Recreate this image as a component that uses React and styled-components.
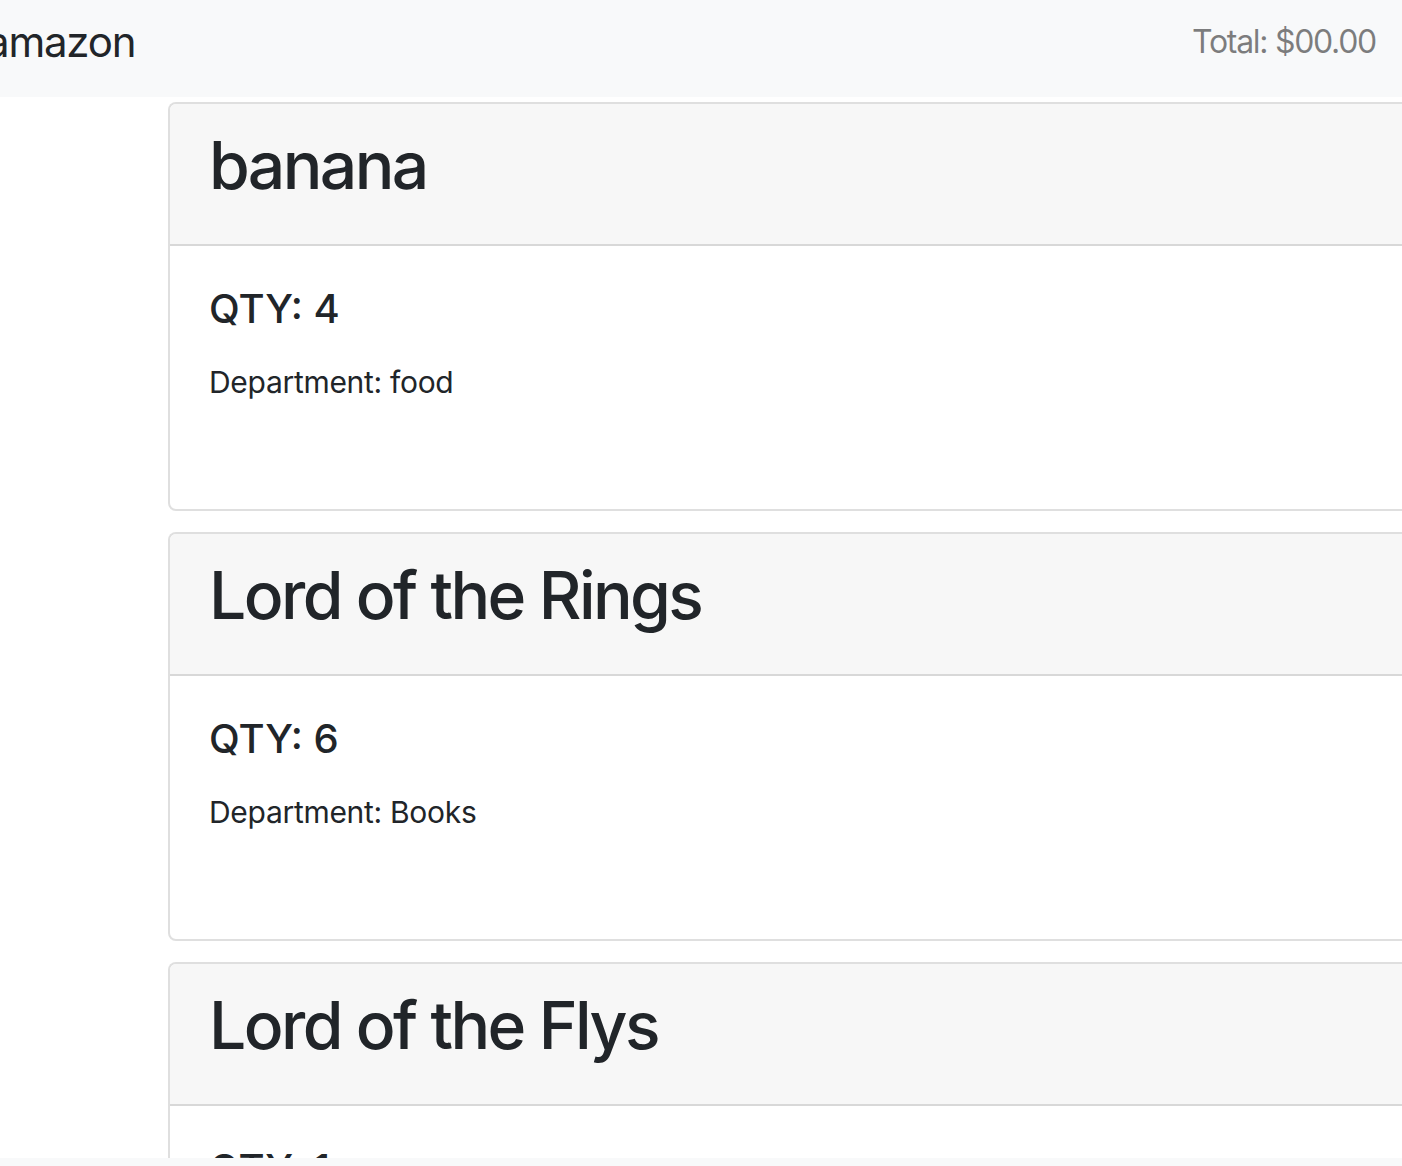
import React from "react";
import styled, { createGlobalStyle } from "styled-components";

const products = [
  { id: 1, name: "banana", qty: 4, department: "food" },
  { id: 2, name: "Lord of the Rings", qty: 6, department: "Books" },
  { id: 3, name: "Lord of the Flys", qty: 1, department: "Books" },
];

const GlobalStyle = createGlobalStyle`
  html, body {
    margin: 0;
    padding: 0;
    overflow: hidden;
    background: #fff;
    font-family: Inter, "Noto Sans", "Liberation Sans", sans-serif;
    color: #212529;
  }
`;

const Navbar = styled.nav`
  display: flex;
  align-items: center;
  justify-content: space-between;
  height: 97px;
  box-sizing: border-box;
  padding: 0 26px 14px 0;
  background: #f8f9fa;
`;

const Brand = styled.span`
  margin-left: -14px;
  font-size: 42px;
  letter-spacing: -1.2px;
  color: #212529;
`;

const Total = styled.span`
  font-size: 32px;
  letter-spacing: -1.3px;
  color: rgba(0, 0, 0, 0.5);
`;

const List = styled.div`
  display: flex;
  flex-direction: column;
  gap: 21px;
  padding: 5px 0 0 168px;
`;

const Card = styled.div`
  width: 1400px;
  border: 2px solid rgba(0, 0, 0, 0.125);
  border-radius: 8px;
  background: #fff;
  overflow: hidden;
`;

const CardHeader = styled.div`
  height: 142px;
  box-sizing: border-box;
  padding: 22px 39px 0;
  background: #f7f7f7;
  border-bottom: 2px solid rgba(0, 0, 0, 0.125);
`;

const Title = styled.h2`
  margin: 0;
  font-size: 66px;
  font-weight: 500;
  line-height: 1.2;
  letter-spacing: -2.6px;
`;

const CardBody = styled.div`
  height: 263px;
  box-sizing: border-box;
  padding: 39px 39px 0;
`;

const Qty = styled.h5`
  margin: 0 0 27px;
  font-size: 40px;
  font-weight: 500;
  line-height: 1.2;
`;

const Dept = styled.p`
  margin: 0;
  font-size: 30px;
  line-height: 1.5;
  letter-spacing: -0.3px;
`;

const Footer = styled.div`
  position: fixed;
  left: 0;
  right: 0;
  bottom: 0;
  height: 8px;
  background: #f8f9fa;
`;

const App = () => {
  return (
    <>
      <GlobalStyle />
      <Navbar>
        <Brand>amazon</Brand>
        <Total>Total: $00.00</Total>
      </Navbar>
      <List>
        {products.map((p) => (
          <Card key={p.id}>
            <CardHeader>
              <Title>{p.name}</Title>
            </CardHeader>
            <CardBody>
              <Qty>QTY: {p.qty}</Qty>
              <Dept>Department: {p.department}</Dept>
            </CardBody>
          </Card>
        ))}
      </List>
      <Footer />
    </>
  );
};

export default App;
